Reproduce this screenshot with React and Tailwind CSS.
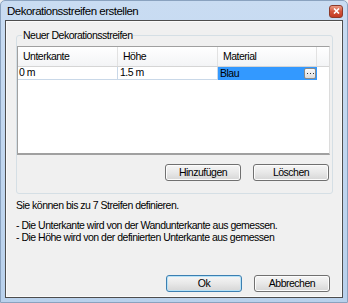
import React from 'react';

const font = { fontFamily: '"Liberation Sans", Arial, sans-serif' };

const WinButton = ({ children, focused }) => (
  <button
    className={`w-[76px] h-[17px] rounded-[3px] border text-[10.5px] tracking-[-0.5px] leading-none text-black bg-gradient-to-b from-[#f6f6f6] via-[#e8e8e8] to-[#d6d6d6] ${
      focused ? 'border-[#3c7fb1] shadow-[inset_0_0_0_1px_#b7e2f7]' : 'border-[#707070] shadow-[inset_0_0_0_1px_#fcfcfc]'
    }`}
  >
    {children}
  </button>
);

const App = () => {
  return (
    <div className="w-[348px] h-[303px] bg-[#f0f0f0]" style={font}>
      {/* Window frame */}
      <div className="w-full h-full flex flex-col bg-gradient-to-b from-[#c9dcf2] to-[#b9d1ec] border border-[#8aa2bf] rounded-t-[5px]">
        {/* Title bar */}
        <div className="h-[19px] flex items-center justify-between pl-[6px] pr-[4px]">
          <span className="text-[11.5px] tracking-[-0.5px] text-black pt-[3px]">Dekorationsstreifen erstellen</span>
          <div className="w-[14px] h-[13px] mt-[1px] rounded-[3px] border border-[#8c3a2a] bg-gradient-to-b from-[#e99a85] via-[#d3543a] to-[#c33a22] flex items-center justify-center">
            <svg width="7" height="6" viewBox="0 0 7 6">
              <path d="M1 0.5 L6 5.5 M6 0.5 L1 5.5" stroke="white" strokeWidth="1.6" />
            </svg>
          </div>
        </div>

        {/* Client area */}
        <div className="flex-1 mx-[4px] mb-[4px] border border-[#4d4d4d] bg-[#f0f0f0] flex flex-col text-[10.5px] tracking-[-0.5px] text-black">
          <div className="flex-1 flex flex-col border border-[#fafafa] pl-[9px] pr-[8px]">
            {/* Group box */}
            <div className="relative mt-[13px] h-[159px] border border-[#d5dfe5] rounded-[3px] flex flex-col">
              <span className="absolute -top-[8px] left-[5px] px-[1px] bg-[#f0f0f0] leading-[14px]">
                Neuer Dekorationsstreifen
              </span>

              {/* Grid */}
              <div className="mt-[10px] mr-[2px] h-[109px] border-t border-l border-[#a0a0a0] border-r-[#dcdcdc] border-r border-b-2 border-b-[#a0a0a0] bg-white flex flex-col">
                <div className="flex h-[20px] bg-gradient-to-b from-[#ffffff] to-[#f3f4f6] border-b border-[#d5d5d5]">
                  <div className="w-[100px] border-r border-[#e2e2e2] pl-[5px] flex items-center pt-[1px]">Unterkante</div>
                  <div className="w-[100px] border-r border-[#e2e2e2] pl-[5px] flex items-center pt-[1px]">Höhe</div>
                  <div className="w-[99px] border-r border-[#e2e2e2] pl-[5px] flex items-center pt-[1px]">Material</div>
                  <div className="flex-1" />
                </div>
                <div className="flex h-[13px]">
                  <div className="w-[100px] border-r border-b border-[#c9d8e8] pl-[1px] flex items-center">0 m</div>
                  <div className="w-[100px] border-r border-b border-[#c9d8e8] pl-[2px] flex items-center">1.5 m</div>
                  <div className="w-[99px] bg-[#3399ff] pl-[2px] flex items-center justify-between pr-[1px]">
                    <span>Blau</span>
                    <div className="w-[12px] h-[11px] rounded-[2px] border border-[#8a8a8a] bg-gradient-to-b from-[#fbfbfb] to-[#dcdcdc] flex items-center justify-center">
                      <svg width="7" height="2" viewBox="0 0 7 2">
                        <rect x="0" y="0" width="1" height="1" fill="#333" />
                        <rect x="3" y="0" width="1" height="1" fill="#333" />
                        <rect x="6" y="0" width="1" height="1" fill="#333" />
                      </svg>
                    </div>
                  </div>
                </div>
              </div>

              {/* Group buttons */}
              <div className="flex justify-end gap-[12px] mt-[9px] mr-[3px]">
                <WinButton>Hinzufügen</WinButton>
                <WinButton>Löschen</WinButton>
              </div>
            </div>

            {/* Info text */}
            <div className="mt-[5px] leading-[12px]">
              <p>Sie können bis zu 7 Streifen definieren.</p>
              <p className="mt-[8px]">- Die Unterkante wird von der Wandunterkante aus gemessen.</p>
              <p>- Die Höhe wird von der definierten Unterkante aus gemessen</p>
            </div>

            <div className="flex-1" />

            {/* Dialog buttons */}
            <div className="flex justify-end gap-[12px] mb-[4px] mr-[3px]">
              <WinButton focused>Ok</WinButton>
              <WinButton>Abbrechen</WinButton>
            </div>
          </div>
        </div>
      </div>
    </div>
  );
};

export default App;
